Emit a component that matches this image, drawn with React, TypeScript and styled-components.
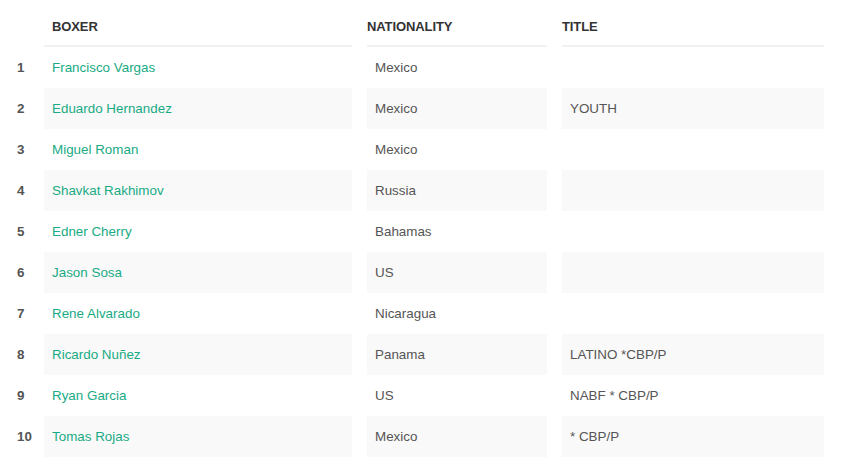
import React from 'react';
import styled, { createGlobalStyle } from 'styled-components';

interface Boxer {
  name: string;
  nationality: string;
  title: string;
}

const boxers: Boxer[] = [
  { name: 'Francisco Vargas', nationality: 'Mexico', title: '' },
  { name: 'Eduardo Hernandez', nationality: 'Mexico', title: 'YOUTH' },
  { name: 'Miguel Roman', nationality: 'Mexico', title: '' },
  { name: 'Shavkat Rakhimov', nationality: 'Russia', title: '' },
  { name: 'Edner Cherry', nationality: 'Bahamas', title: '' },
  { name: 'Jason Sosa', nationality: 'US', title: '' },
  { name: 'Rene Alvarado', nationality: 'Nicaragua', title: '' },
  { name: 'Ricardo Nuñez', nationality: 'Panama', title: 'LATINO *CBP/P' },
  { name: 'Ryan Garcia', nationality: 'US', title: 'NABF * CBP/P' },
  { name: 'Tomas Rojas', nationality: 'Mexico', title: '* CBP/P' },
];

const GlobalStyle = createGlobalStyle`
  body {
    margin: 0;
    background: #fff;
    font-family: "Liberation Sans", Arial, sans-serif;
  }
`;

const Table = styled.div`
  width: 824px;
  display: flex;
  flex-direction: column;
`;

const Row = styled.div`
  display: grid;
  grid-template-columns: 29px 308px 180px 262px;
  column-gap: 15px;
`;

const HeadCell = styled.div<{ $indent?: boolean }>`
  height: 47px;
  padding: 8px ${(p) => (p.$indent ? '8px' : '0')} 0;
  display: flex;
  align-items: center;
  font-size: 13px;
  font-weight: 700;
  color: #333;
  letter-spacing: -0.1px;
  border-bottom: 2px solid #f1f1f1;
  box-sizing: border-box;
`;

const NumHead = styled.div``;

const Cell = styled.div<{ $striped: boolean }>`
  height: 41px;
  padding: 0 8px;
  display: flex;
  align-items: center;
  font-size: 13.4px;
  color: #555;
  background: ${(p) => (p.$striped ? '#f9f9f9' : 'transparent')};
  box-sizing: border-box;
`;

const NumCell = styled.div`
  height: 41px;
  display: flex;
  align-items: center;
  padding-left: 17px;
  font-size: 13.4px;
  font-weight: 700;
  color: #555;
`;

const NameLink = styled.a`
  color: #19ab84;
  text-decoration: none;
`;

export default function App() {
  return (
    <>
      <GlobalStyle />
      <Table>
        <Row>
          <NumHead />
          <HeadCell $indent>BOXER</HeadCell>
          <HeadCell>NATIONALITY</HeadCell>
          <HeadCell>TITLE</HeadCell>
        </Row>
        {boxers.map((b, i) => {
          const striped = i % 2 === 1;
          return (
            <Row key={b.name}>
              <NumCell>{i + 1}</NumCell>
              <Cell $striped={striped}>
                <NameLink href="#">{b.name}</NameLink>
              </Cell>
              <Cell $striped={striped}>{b.nationality}</Cell>
              <Cell $striped={striped}>{b.title}</Cell>
            </Row>
          );
        })}
      </Table>
    </>
  );
}
